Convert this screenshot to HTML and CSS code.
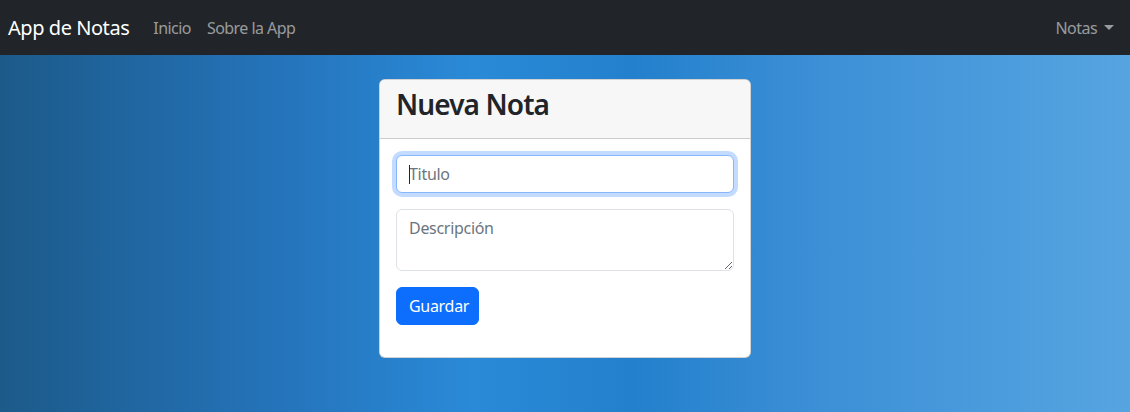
FILE: index.html
```html
<!DOCTYPE html>
<html lang="es">
<head>
<meta charset="utf-8">
<title>App de Notas</title>
<link rel="stylesheet" href="styles.css">
</head>
<body>
<nav class="navbar">
  <div class="nav-left">
    <a class="brand" href="#">App de Notas</a>
    <a class="nav-link" href="#">Inicio</a>
    <a class="nav-link" href="#">Sobre la App</a>
  </div>
  <a class="nav-link dropdown" href="#">Notas<span class="caret"></span></a>
</nav>
<main class="main">
  <div class="card">
    <div class="card-header"><h3 class="title">Nueva Nota</h3></div>
    <form class="card-body">
      <div class="field field-focus">
        <span class="cursor"></span>
        <input class="control" type="text" placeholder="Titulo">
      </div>
      <div class="field">
        <textarea class="control area" placeholder="Descripción"></textarea>
      </div>
      <div class="actions">
        <button class="btn" type="button">Guardar</button>
      </div>
    </form>
  </div>
</main>
</body>
</html>
```
FILE: styles.css
```css
* { box-sizing: border-box; }
html, body { margin: 0; height: 100%; }
body {
  font-family: "Noto Sans", "Open Sans", sans-serif;
  font-size: 16px;
  line-height: 1.5;
  color: #212529;
  background: linear-gradient(to right, #1c5a89 0%, #2574bb 25%, #2a8ad8 42%, #2380cc 56%, #3c8fd6 72%, #56a5e1 100%);
  min-height: 412px;
}
.navbar {
  height: 55px;
  background: #212529;
  display: flex;
  align-items: center;
  justify-content: space-between;
  padding: 0 8px;
}
.nav-left { display: flex; align-items: center; }
.brand {
  color: #fff;
  font-size: 20px;
  text-decoration: none;
  margin-right: 16px;
  letter-spacing: -0.45px;
}
.nav-link {
  color: rgba(255,255,255,.55);
  text-decoration: none;
  padding: 8px;
  letter-spacing: -0.55px;
}
.dropdown { display: flex; align-items: center; }
.caret {
  display: inline-block;
  margin-left: 7px;
  border-top: 5px solid rgba(255,255,255,.55);
  border-left: 5px solid transparent;
  border-right: 5px solid transparent;
}
.main { display: flex; justify-content: center; padding-top: 24px; }
.card {
  width: 372px;
  background: #fff;
  border: 1px solid rgba(0,0,0,.175);
  border-radius: 6px;
  overflow: hidden;
}
.card-header {
  background: #f7f7f7;
  border-bottom: 1px solid rgba(0,0,0,.175);
  padding: 8px 16px;
  height: 59px;
}
.title {
  margin: 0;
  font-size: 28px;
  font-weight: 600;
  line-height: 1.2;
  letter-spacing: -0.9px;
}
.card-body { padding: 16px 16px 16px; margin: 0; }
.field { margin-bottom: 16px; position: relative; }
.control {
  display: block;
  width: 100%;
  height: 38px;
  padding: 6px 12px;
  font: inherit;
  font-size: 16px;
  color: #212529;
  background: #fff;
  border: 1px solid #dee2e6;
  border-radius: 6px;
  outline: none;
}
.control::placeholder { color: #6c757d; opacity: 1; letter-spacing: -0.3px; }
.field-focus .control {
  border-color: #86b7fe;
  box-shadow: 0 0 0 4px rgba(13,110,253,.25);
}
.cursor {
  position: absolute;
  left: 13px;
  top: 10px;
  width: 1px;
  height: 19px;
  background: #212529;
}
.area { height: 62px; resize: vertical; }
.actions { margin-bottom: 16px; }
.btn {
  font: inherit;
  font-size: 16px;
  color: #fff;
  background: #0d6efd;
  border: 1px solid #0d6efd;
  border-radius: 6px;
  height: 38px;
  padding: 0 12px;
  width: 83px;
  letter-spacing: -0.3px;
}
```
